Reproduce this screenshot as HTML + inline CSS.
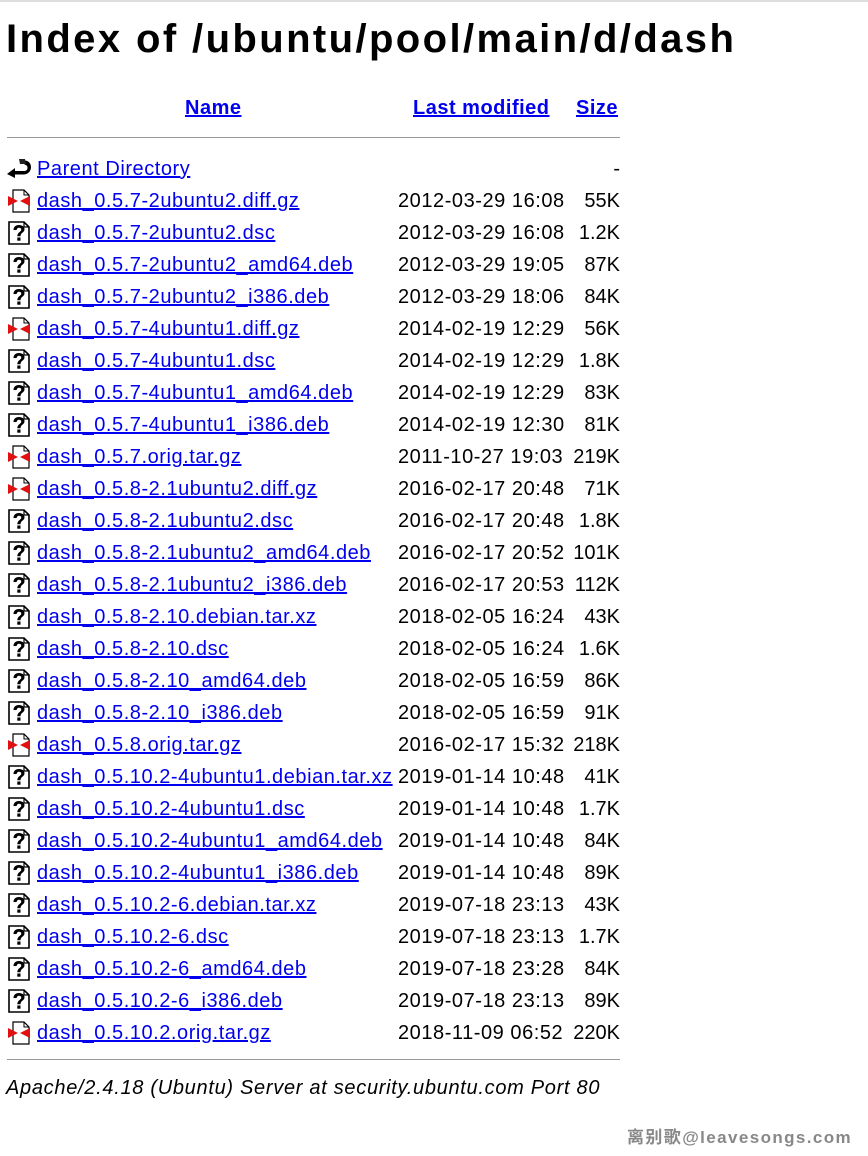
<!DOCTYPE html>
<html><head><meta charset="utf-8"><style>
body{margin:0;width:868px;height:1156px;background:#fff;position:relative;font-family:"Liberation Sans","Noto Sans CJK SC",sans-serif;color:#000;overflow:hidden}
.top{position:absolute;left:0;top:0;width:868px;height:2px;background:#ddd}
h1{position:absolute;left:6px;top:14px;margin:0;font-size:40px;font-weight:bold;line-height:50px;letter-spacing:2.4px}
a{color:#00e;text-decoration:underline}
.hd{position:absolute;top:94px;font-size:20px;font-weight:bold;line-height:28px;letter-spacing:0.5px}
hr{position:absolute;left:7px;width:613px;margin:0;border:0;border-top:1px solid #999;height:0}
.r{position:absolute;left:0;width:868px;height:32px;font-size:20px;line-height:32px;top:1px;letter-spacing:0.55px}
.r svg{position:absolute;left:7px;top:4px}
.n{position:absolute;left:37px;white-space:nowrap}
.d{position:absolute;left:398px}
.s{position:absolute;right:248px;letter-spacing:0}
.addr{position:absolute;left:6px;top:1074px;font-size:20px;font-style:italic;line-height:28px;letter-spacing:0.7px}
.wm{position:absolute;left:627px;top:1123px;font-size:17px;font-weight:bold;color:#888;letter-spacing:1.4px}
</style></head><body>
<div class="top"></div>
<h1>Index of /ubuntu/pool/main/d/dash</h1>
<div class="hd" style="left:185px"><a href="#">Name</a></div>
<div class="hd" style="left:413px"><a href="#">Last modified</a></div>
<div class="hd" style="left:576px"><a href="#">Size</a></div>
<hr style="top:137px">
<svg width="0" height="0" style="position:absolute"><defs>
<symbol id="q" viewBox="0 0 24 24"><path d="M2 1h15l5 5v17H2z" fill="#fff" stroke="#000" stroke-width="1.6"/><path d="M17 1v5h5" fill="none" stroke="#000" stroke-width="1.2"/><path d="M6.5 9c0-3 2.2-5 5.5-5s5.5 1.8 5.5 4.3c0 3.3-4 3.3-4 7h-3.2c0-4.3 4-4.3 4-6.8 0-1.1-.9-1.8-2.3-1.8s-2.3.8-2.3 2.3z" fill="#000"/><rect x="10.3" y="16.5" width="3.2" height="3.2" fill="#000"/></symbol>
<symbol id="z" viewBox="0 0 24 24"><path d="M6 1h11l5 5v17H6z" fill="#fff" stroke="#000" stroke-width="1.2"/><path d="M17 1v5h5" fill="none" stroke="#000" stroke-width="1"/><path d="M1 7l10 5-10 5z M23 7l-10 5 10 5z" fill="#e01010"/></symbol>
<symbol id="b" viewBox="0 0 24 24"><path d="M0 17l8-6v3h9c2.5 0 3.5-1.5 3.5-3.3 0-1.8-1.2-3-3-3V3.5c4 0 6.5 3 6.5 6.5 0 4-2.8 7.5-7.5 7.5H8V21z" fill="#000"/><path d="M12 2h6l1 5h-6z" fill="#222"/></symbol>
</defs></svg>
<div class="r" style="top:153px"><svg width="24" height="24"><use href="#b"/></svg><span class="n"><a href="#">Parent Directory</a></span><span class="s">-</span></div>
<div class="r" style="top:185px"><svg width="24" height="24"><use href="#z"/></svg><span class="n"><a href="#">dash_0.5.7-2ubuntu2.diff.gz</a></span><span class="d">2012-03-29 16:08</span><span class="s">55K</span></div>
<div class="r" style="top:217px"><svg width="24" height="24"><use href="#q"/></svg><span class="n"><a href="#">dash_0.5.7-2ubuntu2.dsc</a></span><span class="d">2012-03-29 16:08</span><span class="s">1.2K</span></div>
<div class="r" style="top:249px"><svg width="24" height="24"><use href="#q"/></svg><span class="n"><a href="#">dash_0.5.7-2ubuntu2_amd64.deb</a></span><span class="d">2012-03-29 19:05</span><span class="s">87K</span></div>
<div class="r" style="top:281px"><svg width="24" height="24"><use href="#q"/></svg><span class="n"><a href="#">dash_0.5.7-2ubuntu2_i386.deb</a></span><span class="d">2012-03-29 18:06</span><span class="s">84K</span></div>
<div class="r" style="top:313px"><svg width="24" height="24"><use href="#z"/></svg><span class="n"><a href="#">dash_0.5.7-4ubuntu1.diff.gz</a></span><span class="d">2014-02-19 12:29</span><span class="s">56K</span></div>
<div class="r" style="top:345px"><svg width="24" height="24"><use href="#q"/></svg><span class="n"><a href="#">dash_0.5.7-4ubuntu1.dsc</a></span><span class="d">2014-02-19 12:29</span><span class="s">1.8K</span></div>
<div class="r" style="top:377px"><svg width="24" height="24"><use href="#q"/></svg><span class="n"><a href="#">dash_0.5.7-4ubuntu1_amd64.deb</a></span><span class="d">2014-02-19 12:29</span><span class="s">83K</span></div>
<div class="r" style="top:409px"><svg width="24" height="24"><use href="#q"/></svg><span class="n"><a href="#">dash_0.5.7-4ubuntu1_i386.deb</a></span><span class="d">2014-02-19 12:30</span><span class="s">81K</span></div>
<div class="r" style="top:441px"><svg width="24" height="24"><use href="#z"/></svg><span class="n"><a href="#">dash_0.5.7.orig.tar.gz</a></span><span class="d">2011-10-27 19:03</span><span class="s">219K</span></div>
<div class="r" style="top:473px"><svg width="24" height="24"><use href="#z"/></svg><span class="n"><a href="#">dash_0.5.8-2.1ubuntu2.diff.gz</a></span><span class="d">2016-02-17 20:48</span><span class="s">71K</span></div>
<div class="r" style="top:505px"><svg width="24" height="24"><use href="#q"/></svg><span class="n"><a href="#">dash_0.5.8-2.1ubuntu2.dsc</a></span><span class="d">2016-02-17 20:48</span><span class="s">1.8K</span></div>
<div class="r" style="top:537px"><svg width="24" height="24"><use href="#q"/></svg><span class="n"><a href="#">dash_0.5.8-2.1ubuntu2_amd64.deb</a></span><span class="d">2016-02-17 20:52</span><span class="s">101K</span></div>
<div class="r" style="top:569px"><svg width="24" height="24"><use href="#q"/></svg><span class="n"><a href="#">dash_0.5.8-2.1ubuntu2_i386.deb</a></span><span class="d">2016-02-17 20:53</span><span class="s">112K</span></div>
<div class="r" style="top:601px"><svg width="24" height="24"><use href="#q"/></svg><span class="n"><a href="#">dash_0.5.8-2.10.debian.tar.xz</a></span><span class="d">2018-02-05 16:24</span><span class="s">43K</span></div>
<div class="r" style="top:633px"><svg width="24" height="24"><use href="#q"/></svg><span class="n"><a href="#">dash_0.5.8-2.10.dsc</a></span><span class="d">2018-02-05 16:24</span><span class="s">1.6K</span></div>
<div class="r" style="top:665px"><svg width="24" height="24"><use href="#q"/></svg><span class="n"><a href="#">dash_0.5.8-2.10_amd64.deb</a></span><span class="d">2018-02-05 16:59</span><span class="s">86K</span></div>
<div class="r" style="top:697px"><svg width="24" height="24"><use href="#q"/></svg><span class="n"><a href="#">dash_0.5.8-2.10_i386.deb</a></span><span class="d">2018-02-05 16:59</span><span class="s">91K</span></div>
<div class="r" style="top:729px"><svg width="24" height="24"><use href="#z"/></svg><span class="n"><a href="#">dash_0.5.8.orig.tar.gz</a></span><span class="d">2016-02-17 15:32</span><span class="s">218K</span></div>
<div class="r" style="top:761px"><svg width="24" height="24"><use href="#q"/></svg><span class="n"><a href="#">dash_0.5.10.2-4ubuntu1.debian.tar.xz</a></span><span class="d">2019-01-14 10:48</span><span class="s">41K</span></div>
<div class="r" style="top:793px"><svg width="24" height="24"><use href="#q"/></svg><span class="n"><a href="#">dash_0.5.10.2-4ubuntu1.dsc</a></span><span class="d">2019-01-14 10:48</span><span class="s">1.7K</span></div>
<div class="r" style="top:825px"><svg width="24" height="24"><use href="#q"/></svg><span class="n"><a href="#">dash_0.5.10.2-4ubuntu1_amd64.deb</a></span><span class="d">2019-01-14 10:48</span><span class="s">84K</span></div>
<div class="r" style="top:857px"><svg width="24" height="24"><use href="#q"/></svg><span class="n"><a href="#">dash_0.5.10.2-4ubuntu1_i386.deb</a></span><span class="d">2019-01-14 10:48</span><span class="s">89K</span></div>
<div class="r" style="top:889px"><svg width="24" height="24"><use href="#q"/></svg><span class="n"><a href="#">dash_0.5.10.2-6.debian.tar.xz</a></span><span class="d">2019-07-18 23:13</span><span class="s">43K</span></div>
<div class="r" style="top:921px"><svg width="24" height="24"><use href="#q"/></svg><span class="n"><a href="#">dash_0.5.10.2-6.dsc</a></span><span class="d">2019-07-18 23:13</span><span class="s">1.7K</span></div>
<div class="r" style="top:953px"><svg width="24" height="24"><use href="#q"/></svg><span class="n"><a href="#">dash_0.5.10.2-6_amd64.deb</a></span><span class="d">2019-07-18 23:28</span><span class="s">84K</span></div>
<div class="r" style="top:985px"><svg width="24" height="24"><use href="#q"/></svg><span class="n"><a href="#">dash_0.5.10.2-6_i386.deb</a></span><span class="d">2019-07-18 23:13</span><span class="s">89K</span></div>
<div class="r" style="top:1017px"><svg width="24" height="24"><use href="#z"/></svg><span class="n"><a href="#">dash_0.5.10.2.orig.tar.gz</a></span><span class="d">2018-11-09 06:52</span><span class="s">220K</span></div>
<hr style="top:1059px">
<div class="addr">Apache/2.4.18 (Ubuntu) Server at security.ubuntu.com Port 80</div>
<div class="wm">离别歌@leavesongs.com</div>
</body></html>
